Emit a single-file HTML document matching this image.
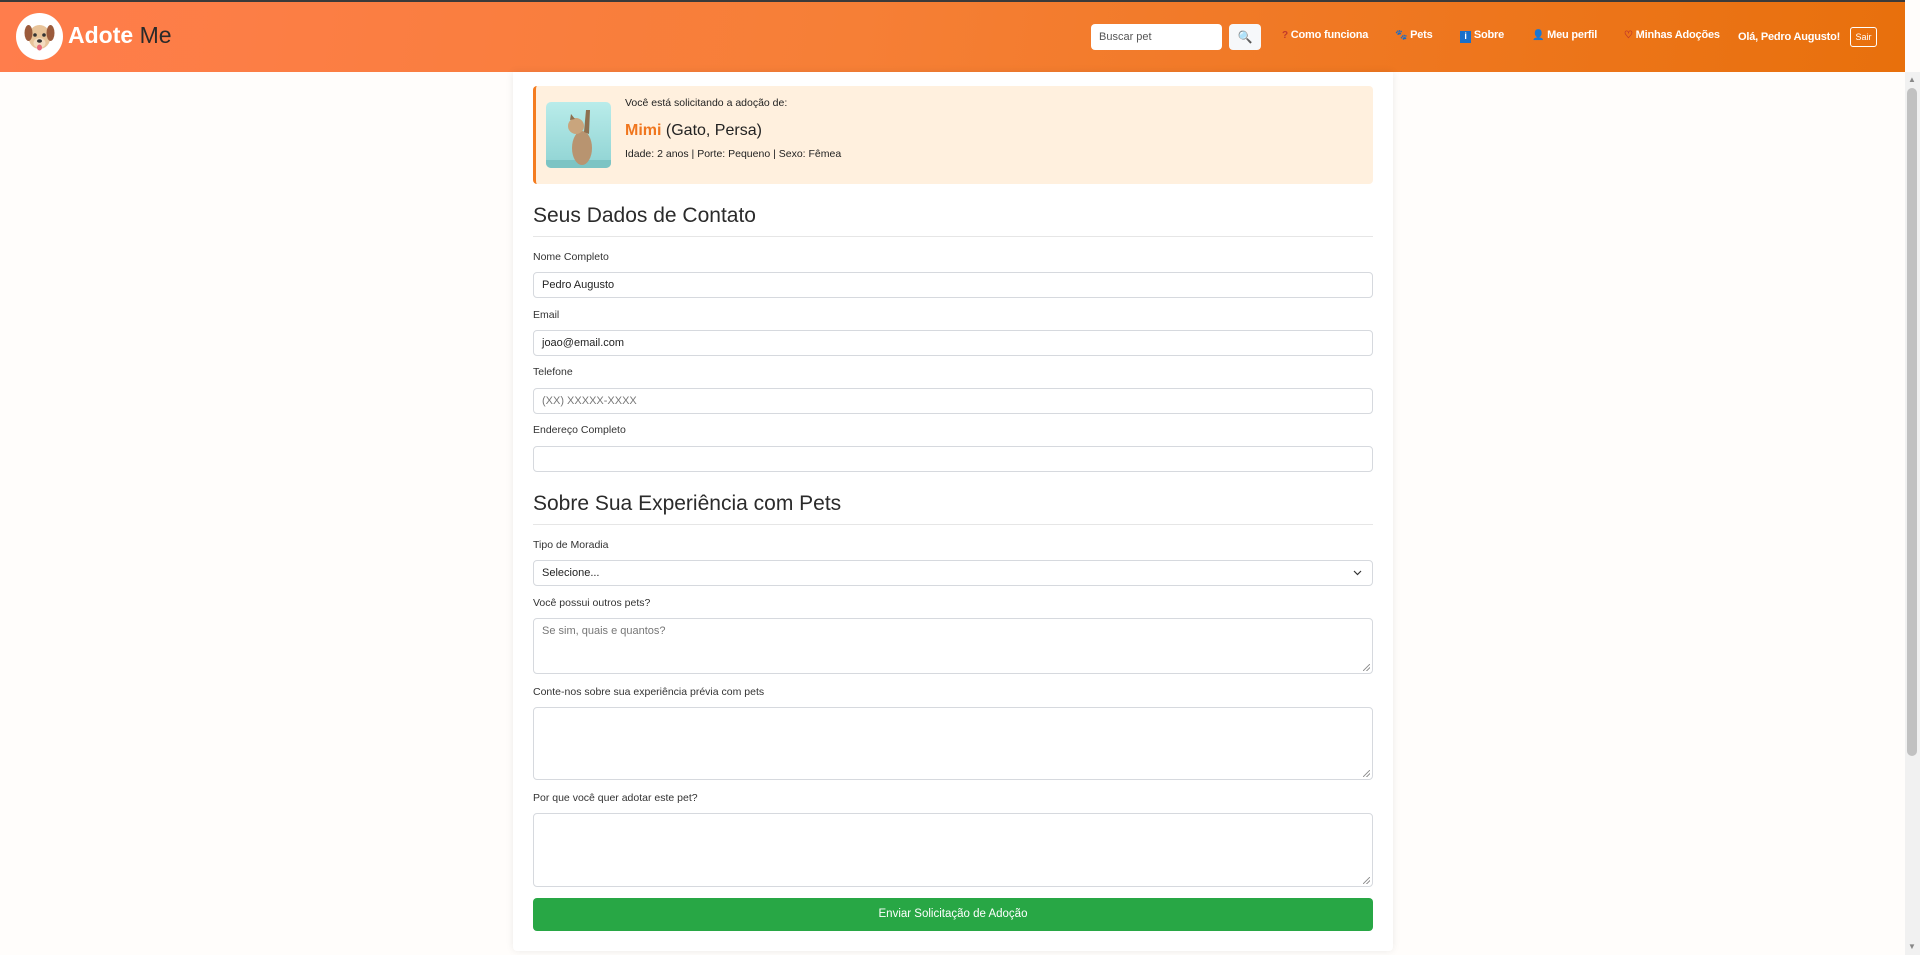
<!DOCTYPE html>
<html><head><meta charset="utf-8">
<style>
*{box-sizing:border-box;margin:0;padding:0}
body{width:1920px;height:955px;overflow:hidden;background:#fffdfb;font-family:"Liberation Sans",Arial,sans-serif;color:#333;position:relative}
.hdr{position:absolute;left:0;top:0;width:1905px;height:72px;background:linear-gradient(100deg,#ff7d4c 0%,#f67f36 45%,#e8700c 100%);border-top:2px solid #3a3a3a}
.abs{position:absolute}
.logo{left:16px;top:13px;width:47px;height:47px;border-radius:50%;background:#fff}
.brand{left:68px;top:22px;font-size:23px;color:#fff;font-weight:bold}
.brand span{font-weight:normal;color:#2a2a2a}
.search{left:1091px;top:24px;width:131px;height:26px;background:#fff;border-radius:4px;font-size:11px;color:#555;padding:7px 8px}
.sbtn{left:1229px;top:24px;width:32px;height:26px;background:#f6f8fa;border-radius:4px;text-align:center;font-size:12px;line-height:26px}
.nav{top:29px;font-size:11px;font-weight:bold;color:#fff;white-space:nowrap;letter-spacing:-0.2px}
.nav span{font-size:10px}
.sair{left:1850px;top:27px;width:27px;height:20px;border:1px solid #fff;border-radius:3px;color:#fff;font-size:9px;text-align:center;line-height:18px}
.card{left:513px;top:72px;width:880px;height:879px;background:#fff;box-shadow:0 0 8px rgba(0,0,0,.08);border-radius:0 0 4px 4px}
.pet{left:533px;top:86px;width:840px;height:98px;background:#fff0de;border-left:3px solid #f47c20;border-radius:4px}
.img{left:546px;top:102px;width:65px;height:66px;border-radius:5px;background:linear-gradient(180deg,#b9ecea,#8fd3d3);overflow:hidden}
.t{font-size:10.5px;color:#222}
h2{position:absolute;left:533px;font-size:21px;font-weight:normal;color:#2b2b2b}
.hr{position:absolute;left:533px;width:840px;height:1px;background:#e6e6e6}
.lbl{position:absolute;left:533px;font-size:10.5px;color:#333}
.in{position:absolute;left:533px;width:840px;border:1px solid #d6d9de;border-radius:4px;background:#fff;font-size:11px;color:#222;padding:0 8px}
.ph{color:#777}
.btn{left:533px;top:898px;width:840px;height:33px;background:#28a745;border-radius:4px;color:#fff;font-size:11.5px;text-align:center;line-height:33px}
.sb{left:1905px;top:72px;width:15px;height:883px;background:#f1f1f1}
.th{left:1907px;top:88px;width:10px;height:668px;background:#c1c1c1;border-radius:5px}
.grip{position:absolute;right:2px;bottom:2px;width:7px;height:7px;background:linear-gradient(135deg,transparent 45%,#999 45%,#999 55%,transparent 55%,transparent 70%,#999 70%,#999 80%,transparent 80%)}
</style></head><body>
<div class="hdr"></div>
<div class="abs logo"><svg width="47" height="47" viewBox="0 0 47 47"><ellipse cx="23.5" cy="24" rx="11" ry="12" fill="#e8c49a"/><ellipse cx="12.5" cy="20" rx="4" ry="8" fill="#9b5b3c"/><ellipse cx="34.5" cy="20" rx="4" ry="8" fill="#9b5b3c"/><ellipse cx="23.5" cy="30" rx="6" ry="5" fill="#f3dcc0"/><circle cx="19" cy="22" r="1.8" fill="#333"/><circle cx="28" cy="22" r="1.8" fill="#333"/><ellipse cx="23.5" cy="28" rx="2.5" ry="1.8" fill="#333"/><ellipse cx="23.5" cy="34.5" rx="2.5" ry="3" fill="#e86a7a"/></svg></div>
<div class="abs brand">Adote <span>Me</span></div>
<div class="abs search">Buscar pet</div>
<div class="abs sbtn">🔍</div>
<div class="abs nav" style="left:1282px"><span style="color:#c0392b">?</span> Como funciona</div>
<div class="abs nav" style="left:1395px"><span style="color:#5a2a10">🐾</span> Pets</div>
<div class="abs nav" style="left:1460px"><span style="display:inline-block;width:11px;height:12px;background:#1a6fc9;color:#fff;font-size:9px;text-align:center;vertical-align:-1px">i</span> Sobre</div>
<div class="abs nav" style="left:1532px"><span style="color:#333">👤</span> Meu perfil</div>
<div class="abs nav" style="left:1624px"><span style="color:#c0392b">♡</span> Minhas Adoções</div>
<div class="abs nav" style="left:1738px;top:31px">Olá, Pedro Augusto!</div>
<div class="abs sair">Sair</div>

<div class="abs card"></div>
<div class="abs pet"></div>
<div class="abs img"><svg width="65" height="66"><rect y="58" width="65" height="8" fill="#7cc4c4"/><ellipse cx="36" cy="46" rx="10" ry="17" fill="#b89470"/><circle cx="30" cy="24" r="8" fill="#c9a57d"/><path d="M38 30 L40 8 L44 8 L43 32Z" fill="#8e7050"/><path d="M24 18 L25 12 L29 17Z" fill="#8e7050"/></svg></div>
<div class="abs t" style="left:625px;top:97px">Você está solicitando a adoção de:</div>
<div class="abs" style="left:625px;top:122px;font-size:16px;color:#222"><b style="color:#f0761e">Mimi</b> (Gato, Persa)</div>
<div class="abs t" style="left:625px;top:148px;font-size:10.5px">Idade: 2 anos | Porte: Pequeno | Sexo: Fêmea</div>

<h2 style="top:204px">Seus Dados de Contato</h2>
<div class="hr" style="top:236px"></div>
<div class="lbl" style="top:251px">Nome Completo</div>
<div class="in" style="top:272px;height:26px;line-height:24px">Pedro Augusto</div>
<div class="lbl" style="top:309px">Email</div>
<div class="in" style="top:330px;height:26px;line-height:24px">joao@email.com</div>
<div class="lbl" style="top:366px">Telefone</div>
<div class="in ph" style="top:388px;height:26px;line-height:24px">(XX) XXXXX-XXXX</div>
<div class="lbl" style="top:424px">Endereço Completo</div>
<div class="in" style="top:446px;height:26px"></div>

<h2 style="top:492px">Sobre Sua Experiência com Pets</h2>
<div class="hr" style="top:524px"></div>
<div class="lbl" style="top:539px">Tipo de Moradia</div>
<div class="in" style="top:560px;height:26px;line-height:24px">Selecione...<svg style="position:absolute;right:10px;top:9px" width="9" height="6"><path d="M1 1 L4.5 4.5 L8 1" stroke="#333" fill="none" stroke-width="1.2"/></svg></div>
<div class="lbl" style="top:597px">Você possui outros pets?</div>
<div class="in ph" style="top:618px;height:56px;padding-top:6px">Se sim, quais e quantos?<div class="grip"></div></div>
<div class="lbl" style="top:686px">Conte-nos sobre sua experiência prévia com pets</div>
<div class="in" style="top:707px;height:73px"><div class="grip"></div></div>
<div class="lbl" style="top:792px">Por que você quer adotar este pet?</div>
<div class="in" style="top:813px;height:74px"><div class="grip"></div></div>
<div class="abs btn">Enviar Solicitação de Adoção</div>

<div class="abs sb"></div>
<div class="abs th"></div>
<div class="abs" style="left:1908px;top:75px;font-size:8px;color:#888">▲</div>
<div class="abs" style="left:1908px;top:942px;font-size:8px;color:#888">▼</div>
</body></html>
